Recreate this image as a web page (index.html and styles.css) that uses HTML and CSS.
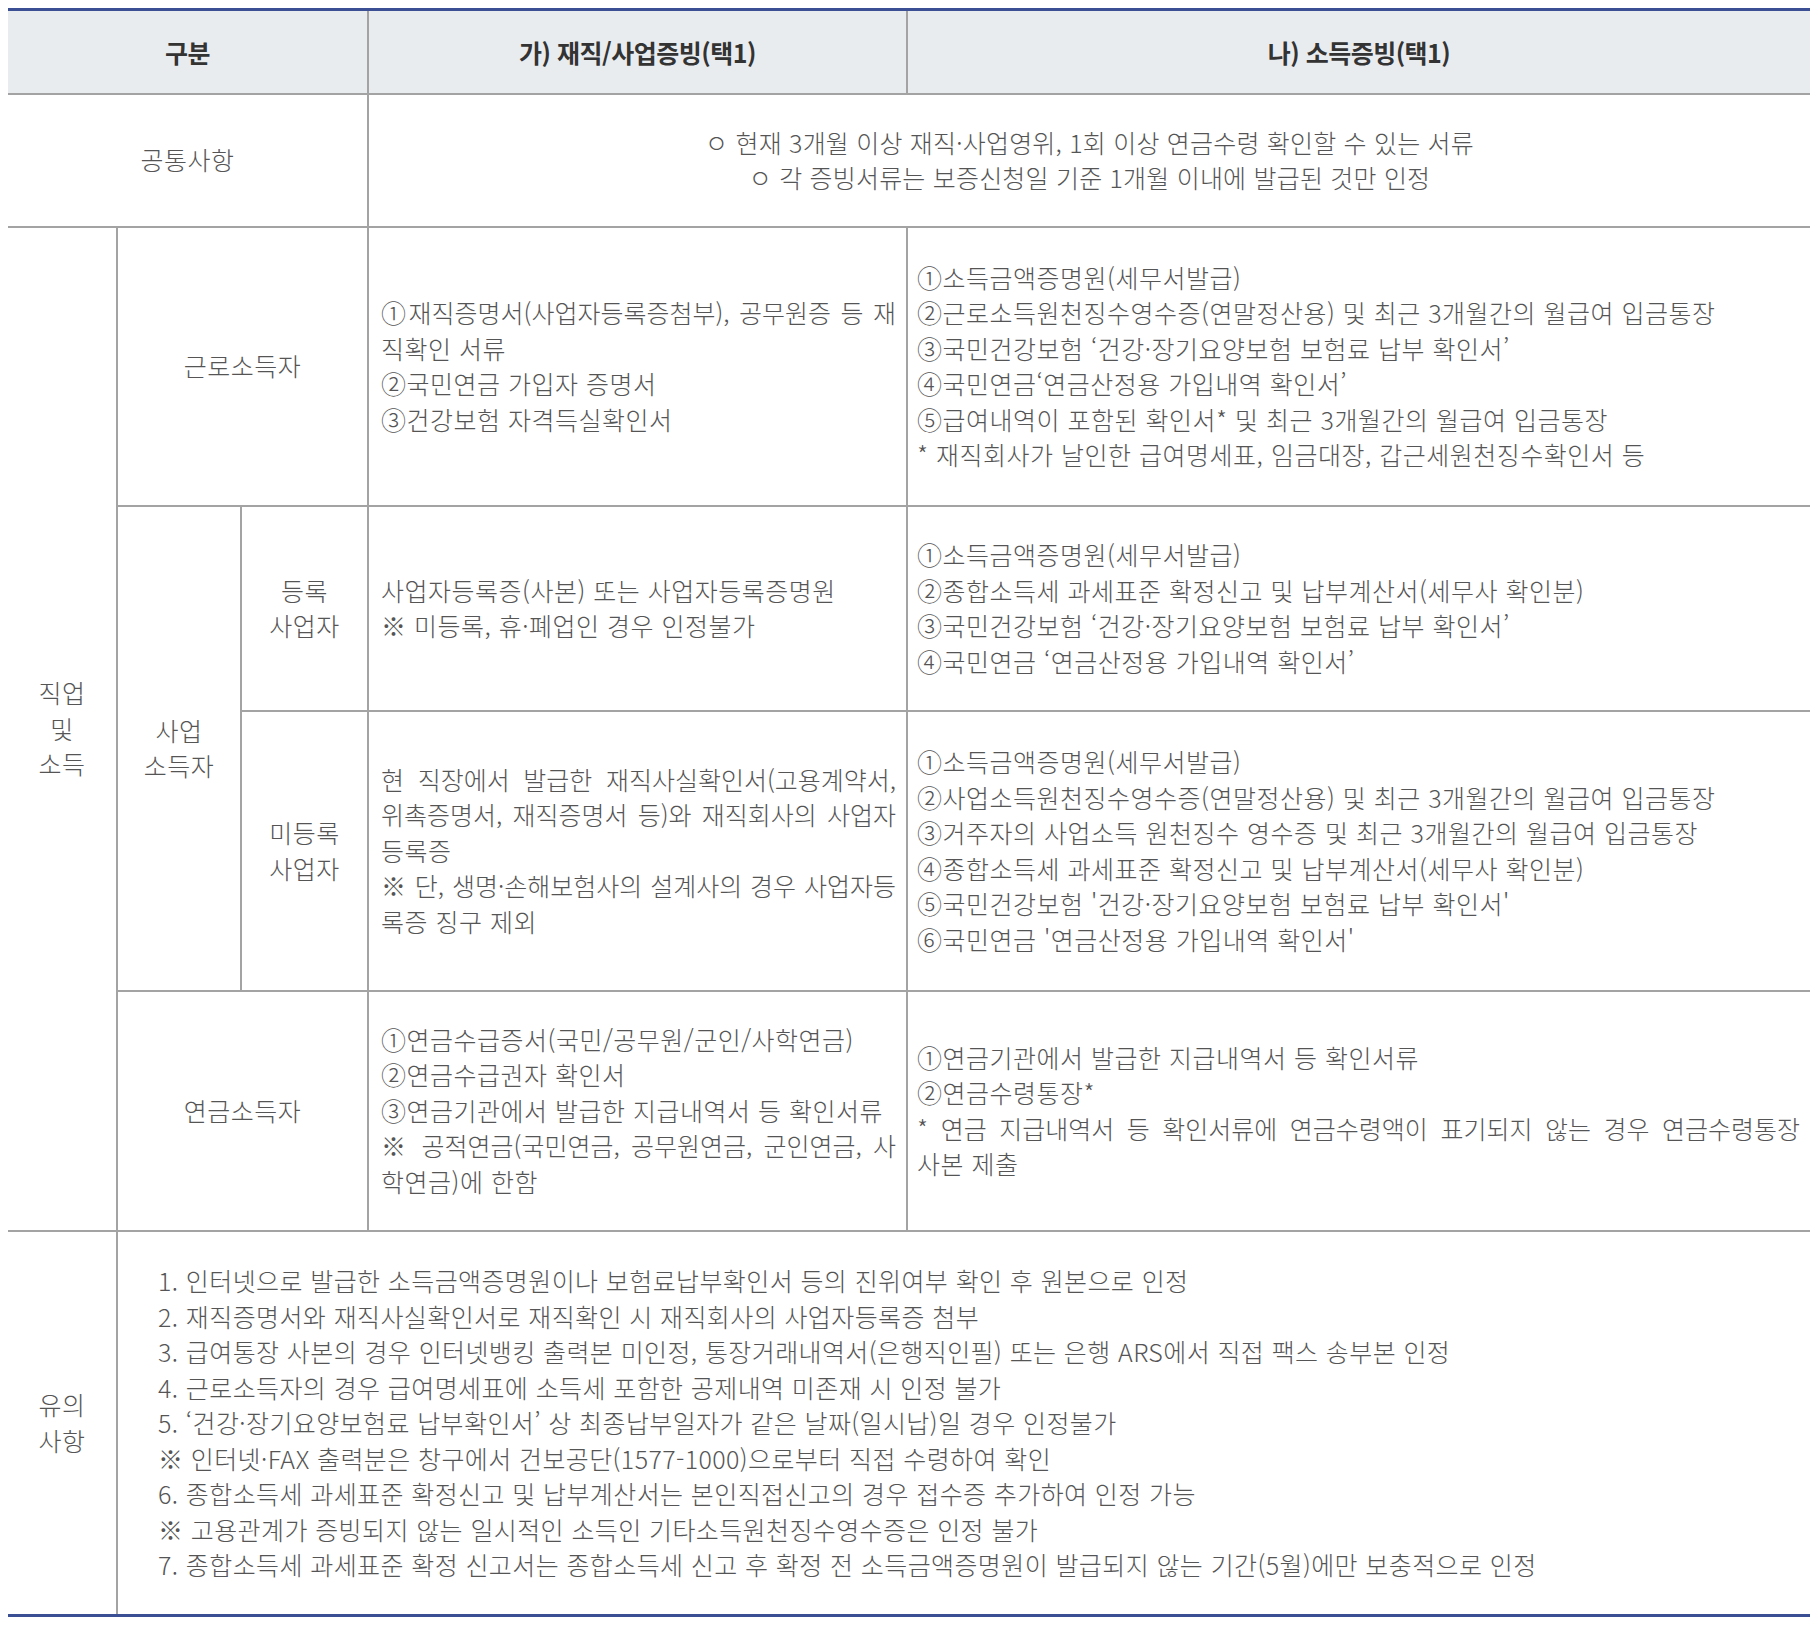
FILE: index.html
```html
<!DOCTYPE html>
<html lang="ko">
<head>
<meta charset="utf-8">
<title>증빙서류 안내</title>
<link rel="stylesheet" href="styles.css">
</head>
<body>
<table class="doc">
  <colgroup>
    <col class="c1"><col class="c2"><col class="c3"><col class="c4"><col class="c5">
  </colgroup>
  <thead>
    <tr class="r-head">
      <th colspan="3">구분</th>
      <th>가) 재직/사업증빙(택1)</th>
      <th>나) 소득증빙(택1)</th>
    </tr>
  </thead>
  <tbody>
    <tr class="r-common">
      <td colspan="3" class="lbl">공통사항</td>
      <td colspan="2" class="center">
        <div class="ln">ㅇ 현재 3개월 이상 재직·사업영위, 1회 이상 연금수령 확인할 수 있는 서류</div>
        <div class="ln">ㅇ 각 증빙서류는 보증신청일 기준 1개월 이내에 발급된 것만 인정</div>
      </td>
    </tr>
    <tr class="r-work">
      <td rowspan="4" class="lbl">직업<br>및<br>소득</td>
      <td colspan="2" class="lbl">근로소득자</td>
      <td class="txt">
        <div class="ln full">①재직증명서(사업자등록증첨부), 공무원증 등 재</div>
        <div class="ln">직확인 서류</div>
        <div class="ln">②국민연금 가입자 증명서</div>
        <div class="ln">③건강보험 자격득실확인서</div>
      </td>
      <td class="txt wide">
        <div class="ln">①소득금액증명원(세무서발급)</div>
        <div class="ln">②근로소득원천징수영수증(연말정산용) 및 최근 3개월간의 월급여 입금통장</div>
        <div class="ln">③국민건강보험 ‘건강·장기요양보험 보험료 납부 확인서’</div>
        <div class="ln">④국민연금‘연금산정용 가입내역 확인서’</div>
        <div class="ln">⑤급여내역이 포함된 확인서* 및 최근 3개월간의 월급여 입금통장</div>
        <div class="ln">* 재직회사가 날인한 급여명세표, 임금대장, 갑근세원천징수확인서 등</div>
      </td>
    </tr>
    <tr class="r-reg">
      <td rowspan="2" class="lbl">사업<br>소득자</td>
      <td class="lbl">등록<br>사업자</td>
      <td class="txt">
        <div class="ln">사업자등록증(사본) 또는 사업자등록증명원</div>
        <div class="ln">※ 미등록, 휴·폐업인 경우 인정불가</div>
      </td>
      <td class="txt wide">
        <div class="ln">①소득금액증명원(세무서발급)</div>
        <div class="ln">②종합소득세 과세표준 확정신고 및 납부계산서(세무사 확인분)</div>
        <div class="ln">③국민건강보험 ‘건강·장기요양보험 보험료 납부 확인서’</div>
        <div class="ln">④국민연금 ‘연금산정용 가입내역 확인서’</div>
      </td>
    </tr>
    <tr class="r-unreg">
      <td class="lbl">미등록<br>사업자</td>
      <td class="txt">
        <div class="ln full">현 직장에서 발급한 재직사실확인서(고용계약서,</div>
        <div class="ln full">위촉증명서, 재직증명서 등)와 재직회사의 사업자</div>
        <div class="ln">등록증</div>
        <div class="ln full">※ 단, 생명·손해보험사의 설계사의 경우 사업자등</div>
        <div class="ln">록증 징구 제외</div>
      </td>
      <td class="txt wide">
        <div class="ln">①소득금액증명원(세무서발급)</div>
        <div class="ln">②사업소득원천징수영수증(연말정산용) 및 최근 3개월간의 월급여 입금통장</div>
        <div class="ln">③거주자의 사업소득 원천징수 영수증 및 최근 3개월간의 월급여 입금통장</div>
        <div class="ln">④종합소득세 과세표준 확정신고 및 납부계산서(세무사 확인분)</div>
        <div class="ln">⑤국민건강보험 '건강·장기요양보험 보험료 납부 확인서'</div>
        <div class="ln">⑥국민연금 '연금산정용 가입내역 확인서'</div>
      </td>
    </tr>
    <tr class="r-pen">
      <td colspan="2" class="lbl">연금소득자</td>
      <td class="txt">
        <div class="ln">①연금수급증서(국민/공무원/군인/사학연금)</div>
        <div class="ln">②연금수급권자 확인서</div>
        <div class="ln">③연금기관에서 발급한 지급내역서 등 확인서류</div>
        <div class="ln full">※ 공적연금(국민연금, 공무원연금, 군인연금, 사</div>
        <div class="ln">학연금)에 한함</div>
      </td>
      <td class="txt wide">
        <div class="ln">①연금기관에서 발급한 지급내역서 등 확인서류</div>
        <div class="ln">②연금수령통장*</div>
        <div class="ln full">* 연금 지급내역서 등 확인서류에 연금수령액이 표기되지 않는 경우 연금수령통장</div>
        <div class="ln">사본 제출</div>
      </td>
    </tr>
    <tr class="r-note">
      <td class="lbl">유의<br>사항</td>
      <td colspan="4" class="notes">
        <div class="ln">1. 인터넷으로 발급한 소득금액증명원이나 보험료납부확인서 등의 진위여부 확인 후 원본으로 인정</div>
        <div class="ln">2. 재직증명서와 재직사실확인서로 재직확인 시 재직회사의 사업자등록증 첨부</div>
        <div class="ln">3. 급여통장 사본의 경우 인터넷뱅킹 출력본 미인정, 통장거래내역서(은행직인필) 또는 은행 ARS에서 직접 팩스 송부본 인정</div>
        <div class="ln">4. 근로소득자의 경우 급여명세표에 소득세 포함한 공제내역 미존재 시 인정 불가</div>
        <div class="ln">5. ‘건강·장기요양보험료 납부확인서’ 상 최종납부일자가 같은 날짜(일시납)일 경우 인정불가</div>
        <div class="ln">※ 인터넷·FAX 출력분은 창구에서 건보공단(1577-1000)으로부터 직접 수령하여 확인</div>
        <div class="ln">6. 종합소득세 과세표준 확정신고 및 납부계산서는 본인직접신고의 경우 접수증 추가하여 인정 가능</div>
        <div class="ln">※ 고용관계가 증빙되지 않는 일시적인 소득인 기타소득원천징수영수증은 인정 불가</div>
        <div class="ln">7. 종합소득세 과세표준 확정 신고서는 종합소득세 신고 후 확정 전 소득금액증명원이 발급되지 않는 기간(5월)에만 보충적으로 인정</div>
      </td>
    </tr>
  </tbody>
</table>
</body>
</html>
```

FILE: styles.css
```css
html, body {
  background: #ffffff;
}
body {
  margin: 8px;
  font-family: "Noto Sans CJK KR", "Noto Sans", sans-serif;
  color: #555555;
}
.doc {
  width: 1802px;
  table-layout: fixed;
  border-collapse: collapse;
  border-top: 3px solid #3a4f94;
  border-bottom: 3px solid #3a4f94;
}
.c1 { width: 109px; }
.c2 { width: 124px; }
.c3 { width: 127px; }
.c4 { width: 539px; }
.c5 { width: 903px; }

.doc th,
.doc td {
  border: 2px solid #a3a3a3;
  vertical-align: middle;
  padding: 0;
}
.doc tr > :first-child { border-left: none; }
.doc tr > :last-child { border-right: none; }

.doc th {
  background: #e9ecef;
  color: #333333;
  font-size: 25px;
  font-weight: 700;
  letter-spacing: -0.5px;
  text-align: center;
  border-top: none;
}
.r-head { height: 84px; }
.r-common { height: 133px; }
.r-work { height: 279px; }
.r-reg { height: 205px; }
.r-unreg { height: 280px; }
.r-pen { height: 240px; }
.r-note { height: 385px; }

.doc td {
  font-size: 25px;
  font-weight: 300;
  letter-spacing: 0.5px;
  line-height: 35.5px;
}
.doc td.lbl {
  text-align: center;
}
.doc td.center {
  text-align: center;
  letter-spacing: 0.2px;
}
.doc td.txt {
  padding: 0 10px 0 12px;
  text-align: left;
}
.doc td.txt.wide {
  padding: 0 10px 0 9px;
}
.doc td.notes {
  padding: 0 12px 0 40px;
  text-align: left;
  letter-spacing: 0.4px;
}
.ln {
  white-space: nowrap;
}
.ln.full {
  text-align: justify;
  text-align-last: justify;
  letter-spacing: 0;
}
.doc .r-note td {
  border-bottom: none;
}
```
